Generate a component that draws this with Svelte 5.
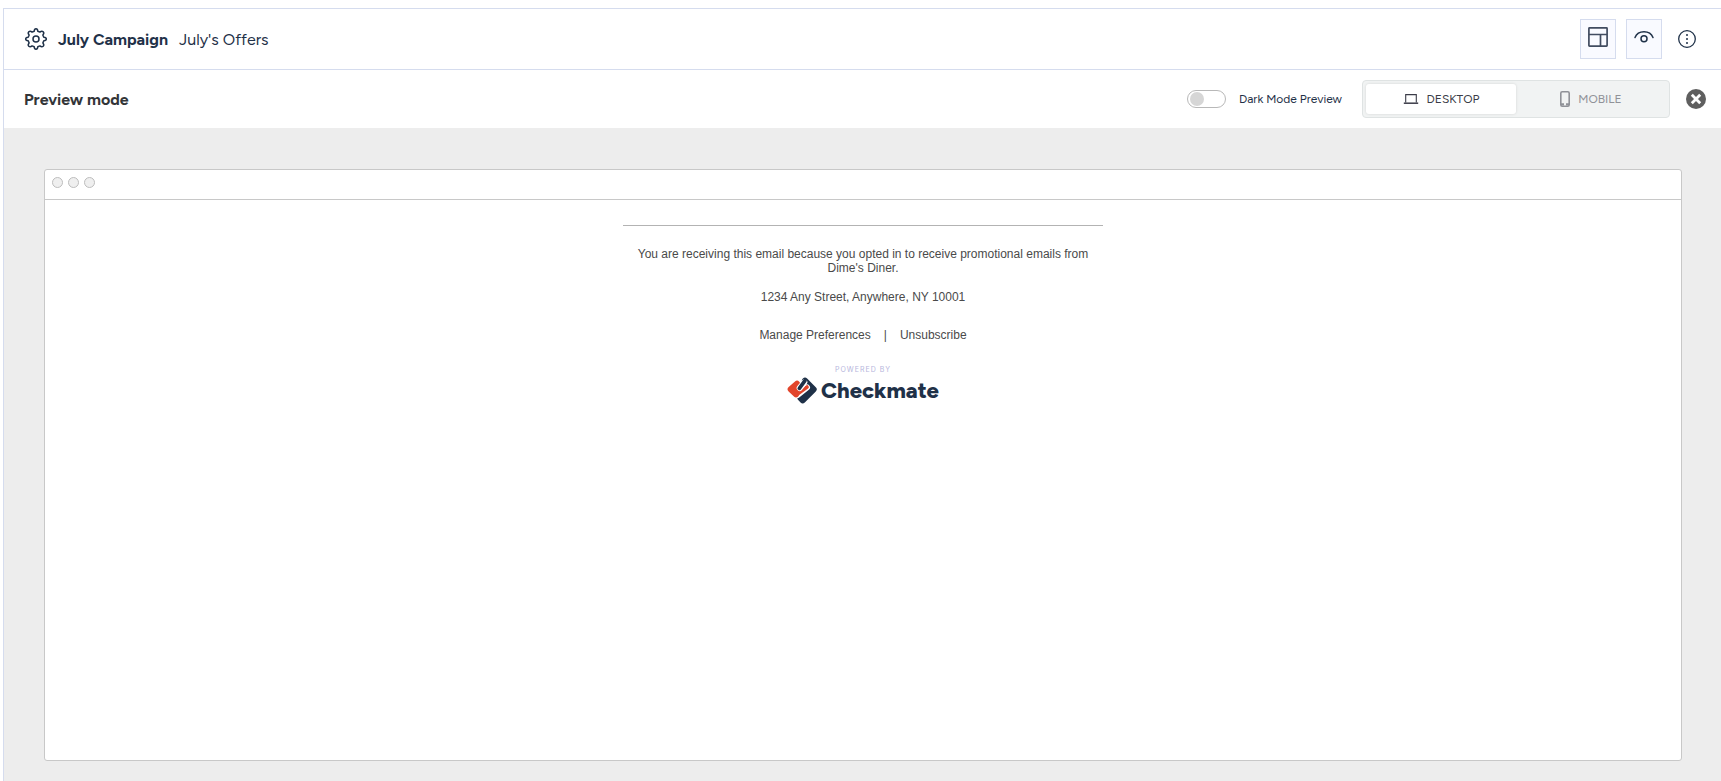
<script lang="ts">
    type Device = 'desktop' | 'mobile';

    let darkMode: boolean = $state(false);
    let device: Device = $state('desktop');
</script>

<main class="editor">
    <header class="topbar">
        <button class="plain" aria-label="Campaign settings">
            <svg width="24" height="24" viewBox="0 0 24 24" fill="none" stroke="#1f3148" stroke-width="1.5" stroke-linejoin="round">
                <path d="M10.2 4.2 Q10.4 1.7 12 1.7 Q13.6 1.7 13.8 4.2 L15.9 5.1 Q17.8 3.5 19.2 4.8 Q20.5 6.2 18.9 8.1 L19.8 10.2 Q22.3 10.4 22.3 12 Q22.3 13.6 19.8 13.8 L18.9 15.9 Q20.5 17.8 19.2 19.2 Q17.8 20.5 15.9 18.9 L13.8 19.8 Q13.6 22.3 12 22.3 Q10.4 22.3 10.2 19.8 L8.1 18.9 Q6.2 20.5 4.8 19.2 Q3.5 17.8 5.1 15.9 L4.2 13.8 Q1.7 13.6 1.7 12 Q1.7 10.4 4.2 10.2 L5.1 8.1 Q3.5 6.2 4.8 4.8 Q6.2 3.5 8.1 5.1 Z" />
                <circle cx="12" cy="12" r="3" />
            </svg>
        </button>
        <h1>July Campaign</h1>
        <span class="subject">July's Offers</span>
        <div class="actions">
            <button class="boxed" aria-label="Layout">
                <svg width="20" height="20" viewBox="0 0 20 20" fill="none" stroke="#414c60" stroke-width="1.7">
                    <rect x="0.9" y="0.9" width="18.2" height="18.2" rx="0.6" />
                    <path d="M1 7.5 H19 M12.5 7.5 V19" />
                </svg>
            </button>
            <button class="boxed" aria-label="Preview">
                <svg width="20" height="20" viewBox="0 0 20 20" fill="none" stroke="#1f3148" stroke-width="1.5" stroke-linecap="round">
                    <path d="M1 10.5 C4 2.7 16 2.7 19 10.5" />
                    <circle cx="10" cy="11.8" r="3" />
                </svg>
            </button>
            <button class="plain more" aria-label="More options">
                <svg width="18" height="18" viewBox="0 0 18 18" fill="#1f3148">
                    <circle cx="9" cy="9" r="8.3" fill="none" stroke="#1f3148" stroke-width="1.3" />
                    <circle cx="9" cy="5" r="1" />
                    <circle cx="9" cy="9" r="1" />
                    <circle cx="9" cy="13" r="1" />
                </svg>
            </button>
        </div>
    </header>

    <section class="previewbar">
        <h2>Preview mode</h2>
        <label class="dark">
            <input type="checkbox" role="switch" bind:checked={darkMode} />
            Dark Mode Preview
        </label>
        <div class="segments">
            <button class:active={device === 'desktop'} onclick={() => device = 'desktop'}>
                <svg width="16" height="12" viewBox="0 0 16 12" fill="none" stroke="currentColor" stroke-width="1.1">
                    <path d="M2.7 9.5 V1.6 H13.3 V9.5" />
                    <path d="M0.8 10.2 H15.2" stroke-width="1.5" />
                </svg>
                DESKTOP
            </button>
            <button class:active={device === 'mobile'} onclick={() => device = 'mobile'}>
                <svg width="10" height="16" viewBox="0 0 10 16" fill="none" stroke="currentColor">
                    <rect x="0.8" y="0.8" width="8.4" height="14.4" rx="1.4" stroke-width="1.6" />
                    <path d="M1 13.4 H4 M6 13.4 H9" stroke-width="2.4" />
                </svg>
                MOBILE
            </button>
        </div>
        <button class="plain" aria-label="Close preview">
            <svg width="20" height="20" viewBox="0 0 20 20">
                <circle cx="10" cy="10" r="10" fill="#5f5f5f" />
                <path d="M5.8 5.8 L14.2 14.2 M14.2 5.8 L5.8 14.2" stroke="#fff" stroke-width="2.8" />
            </svg>
        </button>
    </section>

    <section class="stage">
        <div class="browser" class:dark-preview={darkMode} class:narrow={device === 'mobile'}>
            <div class="chrome">
                <i></i><i></i><i></i>
            </div>
            <div class="email">
                <hr />
                <p>You are receiving this email because you opted in to receive promotional emails from Dime's Diner.</p>
                <p>1234 Any Street, Anywhere, NY 10001</p>
                <nav>
                    <a href="#preferences">Manage Preferences</a>
                    <span>|</span>
                    <a href="#unsubscribe">Unsubscribe</a>
                </nav>
                <div class="powered">POWERED BY</div>
                <div class="brand">
                    <svg width="30" height="27" viewBox="0 0 90 81" fill="none" stroke-linecap="round" stroke-linejoin="round">
                        <path d="M54 11 L80 37 L47 70 L40 63 L66 37 L52 24" stroke="#1f3148" stroke-width="18" />
                        <path d="M30 55 L60 31" stroke="#fff" stroke-width="18" />
                        <path d="M30 20 L11 37 L27 52 M24 33 L32 41" stroke="#e2452b" stroke-width="18" />
                        <path d="M27 54 L60 30" stroke="#e2452b" stroke-width="11" />
                        <path d="M52 16 L38 33" stroke="#fff" stroke-width="18" />
                        <path d="M54 11 L37 34" stroke="#1f3148" stroke-width="11" />
                    </svg>
                    <span>Checkmate</span>
                </div>
            </div>
        </div>
    </section>
</main>

<style>
    :global(body) {
        margin: 0;
        background: #fff;
    }

    .editor {
        box-sizing: border-box;
        display: flex;
        flex-direction: column;
        min-height: calc(100vh - 8px);
        margin: 8px 0 0 3px;
        border-top: 1px solid #d5dcee;
        border-left: 1px solid #d5dcee;
        font-family: Figtree, Lato, "Open Sans", sans-serif;
        color: #1f3148;
    }

    button {
        display: flex;
        align-items: center;
        justify-content: center;
        padding: 0;
        border: 0;
        background: none;
        font: inherit;
        color: inherit;
        cursor: pointer;
    }

    .topbar {
        display: flex;
        align-items: center;
        height: 60px;
        padding: 0 25px 0 20px;
        border-bottom: 1px solid #d5dcee;
        font-size: 16px;
    }

    h1,
    h2 {
        margin: 0;
        font-size: 16px;
        font-weight: 700;
    }

    h1 {
        margin: 0 11px 0 10px;
    }

    .actions {
        display: flex;
        align-items: center;
        gap: 10px;
        margin-left: auto;
    }

    .boxed {
        box-sizing: border-box;
        width: 36px;
        height: 40px;
        padding-bottom: 4px;
        border: 1px solid #d5dcee;
        background: #f9faff;
    }

    .more {
        margin-left: 6px;
    }

    .previewbar {
        display: flex;
        align-items: center;
        height: 58px;
        padding: 0 15px 0 20px;
    }

    h2 {
        margin-right: auto;
        color: #333538;
    }

    .dark {
        display: flex;
        align-items: center;
        gap: 13px;
        margin-right: 20px;
        font-size: 12px;
        cursor: pointer;
    }

    .dark input {
        appearance: none;
        box-sizing: border-box;
        display: flex;
        width: 39px;
        height: 18px;
        margin: 0;
        padding: 1px 2px;
        border: 1px solid #b8b8b8;
        border-radius: 9px;
        background: #fff;
    }

    .dark input::before {
        content: "";
        width: 14px;
        height: 14px;
        border-radius: 50%;
        background: #d6d6d6;
    }

    .dark input:checked {
        justify-content: flex-end;
        background: #1f3148;
    }

    .segments {
        display: flex;
        margin-right: 16px;
        padding: 3px;
        border: 1px solid #dfe3e3;
        border-radius: 4px;
        background: #f1f3f3;
        font-size: 12px;
        color: #909298;
    }

    .segments button {
        gap: 8px;
        width: 150px;
        height: 30px;
        border-radius: 3px;
    }

    .segments .active {
        background: #fff;
        color: #3b3c48;
        box-shadow: 0 0 3px rgba(0, 0, 0, 0.12);
    }

    .stage {
        display: flex;
        flex: 1;
        padding: 41px 39px 20px 40px;
        background: #ededed;
    }

    .browser {
        flex: 1;
        border: 1px solid #c8c8c8;
        border-radius: 3px;
        background: #fff;
    }

    .narrow {
        max-width: 375px;
        margin: 0 auto;
    }

    .dark-preview {
        filter: invert(1) hue-rotate(180deg);
    }

    .chrome {
        display: flex;
        gap: 5px;
        height: 22px;
        padding: 7px 7px 0;
        border-bottom: 1px solid #c8c8c8;
    }

    .chrome i {
        box-sizing: border-box;
        width: 11px;
        height: 11px;
        border: 1px solid #bdbdbd;
        border-radius: 50%;
        background: #efefef;
    }

    .email {
        max-width: 480px;
        margin: 0 auto;
        padding-top: 25px;
        font-family: Arial, "Liberation Sans", sans-serif;
        font-size: 12px;
        line-height: 14px;
        text-align: center;
        color: #4a4a4a;
    }

    hr {
        margin: 0 0 21px;
        border: 0;
        border-top: 1px solid #b3b3b3;
    }

    p {
        margin: 0 10px 15px;
    }

    nav {
        display: flex;
        justify-content: center;
        gap: 13px;
        margin-top: 24px;
    }

    a {
        color: inherit;
        text-decoration: none;
    }

    .powered {
        margin-top: 21px;
        font-family: Inter, sans-serif;
        font-size: 7px;
        letter-spacing: 1px;
        color: #b6b5dc;
    }

    .brand {
        display: flex;
        align-items: center;
        justify-content: center;
        gap: 4px;
        font-family: Figtree, Inter, sans-serif;
        font-size: 22px;
        line-height: 27px;
        font-weight: 800;
        color: #1f3148;
    }
</style>
